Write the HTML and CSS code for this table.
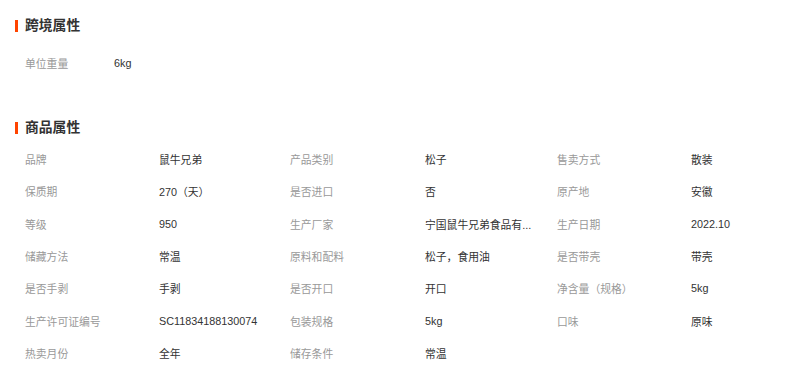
FILE: index.html
```html
<!DOCTYPE html>
<html lang="zh-CN">
<head>
<meta charset="utf-8">
<title>属性</title>
<link rel="stylesheet" href="styles.css">
</head>
<body>
<section class="block block-cross">
  <h2 class="block-title">跨境属性</h2>
  <div class="cross-row">
    <span class="label cross-label">单位重量</span>
    <span class="value">6kg</span>
  </div>
</section>
<section class="block block-goods">
  <h2 class="block-title">商品属性</h2>
  <div class="attr-grid">
    <span class="label">品牌</span><span class="value">鼠牛兄弟</span>
    <span class="label">产品类别</span><span class="value">松子</span>
    <span class="label">售卖方式</span><span class="value">散装</span>

    <span class="label">保质期</span><span class="value">270（天）</span>
    <span class="label">是否进口</span><span class="value">否</span>
    <span class="label">原产地</span><span class="value">安徽</span>

    <span class="label">等级</span><span class="value">950</span>
    <span class="label">生产厂家</span><span class="value" title="宁国鼠牛兄弟食品有限公司">宁国鼠牛兄弟食品有...</span>
    <span class="label">生产日期</span><span class="value">2022.10</span>

    <span class="label">储藏方法</span><span class="value">常温</span>
    <span class="label">原料和配料</span><span class="value">松子，食用油</span>
    <span class="label">是否带壳</span><span class="value">带壳</span>

    <span class="label">是否手剥</span><span class="value">手剥</span>
    <span class="label">是否开口</span><span class="value">开口</span>
    <span class="label">净含量（规格）</span><span class="value">5kg</span>

    <span class="label">生产许可证编号</span><span class="value">SC11834188130074</span>
    <span class="label">包装规格</span><span class="value">5kg</span>
    <span class="label">口味</span><span class="value">原味</span>

    <span class="label">热卖月份</span><span class="value">全年</span>
    <span class="label">储存条件</span><span class="value">常温</span>
  </div>
</section>
</body>
</html>
```

FILE: styles.css
```css
html, body {
  margin: 0;
  padding: 0;
  background: #ffffff;
}

body {
  font-family: "Liberation Sans", "Noto Sans CJK SC", sans-serif;
  color: #333333;
  padding: 16px 0 0 15px;
  width: 807px;
  box-sizing: border-box;
  overflow: hidden;
}

.block-title {
  margin: 0;
  height: 20px;
  line-height: 20px;
  font-size: 13.8px;
  font-weight: bold;
  color: #333333;
  display: flex;
  align-items: center;
}

.block-title::before {
  content: "";
  display: inline-block;
  width: 3px;
  height: 12px;
  background: #ff4400;
  margin-right: 7px;
}

.label {
  color: #999999;
  font-size: 10.8px;
  white-space: nowrap;
}

.value {
  color: #333333;
  font-size: 10.8px;
  white-space: nowrap;
}

.cross-row {
  display: flex;
  align-items: center;
  height: 32px;
  margin-top: 11px;
  padding-left: 10px;
}

.cross-label {
  width: 89px;
}

.block-goods {
  margin-top: 39px;
}

.attr-grid {
  display: grid;
  grid-template-columns: 134px 131px 135px 132px 134px 110px;
  grid-auto-rows: 32.33px;
  align-items: center;
  margin-top: 5px;
  padding-left: 10px;
}
```
